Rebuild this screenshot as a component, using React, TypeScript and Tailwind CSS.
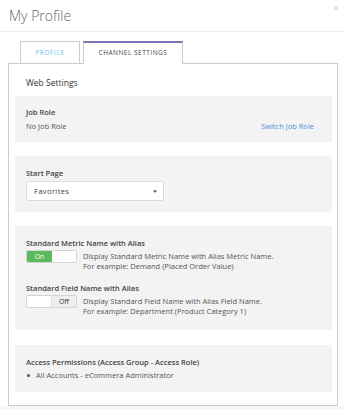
import React from 'react';

const font = { fontFamily: '"Open Sans", "Liberation Sans", sans-serif' };

function Toggle({ on }: { on: boolean }) {
  return (
    <div className="flex h-[13px] w-[51px] shrink-0 overflow-hidden rounded-[2px] border border-[#d4d4d4] bg-white text-[7px] leading-[11px]">
      {on ? (
        <>
          <div className="flex w-[25px] items-center justify-center bg-[#5cb85c] text-white">On</div>
          <div className="flex-1 bg-white" />
        </>
      ) : (
        <>
          <div className="flex-1 bg-white" />
          <div className="flex w-[25px] items-center justify-center border-l border-[#ddd] bg-[#eeeeee] text-[#333]">Off</div>
        </>
      )}
    </div>
  );
}

export default function App() {
  return (
    <div className="relative h-[409px] w-[344px] overflow-hidden bg-white text-[#555]" style={font}>
      {/* header */}
      <div className="flex h-[32px] items-center border-b border-[#ececec] pl-[9px]">
        <h1 className="text-[14px] font-light leading-none text-[#666]">My Profile</h1>
      </div>
      <span className="absolute right-[5px] top-[3px] text-[10px] leading-none text-[#ccc]">×</span>

      {/* tabs */}
      <div className="mt-[9px] flex gap-[3px] pl-[20px]">
        <div className="relative z-10 flex h-[22px] w-[60px] items-center justify-center border border-b-0 border-[#ccc] bg-white text-[6.5px] tracking-[0.6px] text-[#6ec5e6]">
          PROFILE
        </div>
        <div className="relative z-10 -mb-px flex h-[23px] w-[100px] items-center justify-center border-x border-t-[2px] border-x-[#ccc] border-t-[#7d72b5] bg-white pb-px text-[6.5px] tracking-[0.5px] text-[#444]">
          CHANNEL SETTINGS
        </div>
      </div>

      {/* content box */}
      <div className="ml-[8px] h-[343px] w-[330px] border border-[#ccc] pl-[6px] pr-[5px] pt-[13px]">
        <div className="pl-[11px] text-[8.5px] leading-[12px] text-[#333]">Web Settings</div>

        <div className="mt-[7px] bg-[#f3f3f3] px-[11px] pb-[11px] pt-[11px] text-[7.5px] leading-[10px]">
          <div className="font-semibold text-[#444]">Job Role</div>
          <div className="mt-[4px] flex justify-between pr-[7px]">
            <span>No Job Role</span>
            <span className="text-[#4a90d9]">Switch Job Role</span>
          </div>
        </div>

        <div className="mt-[14px] bg-[#f3f3f3] px-[11px] pb-[11px] pt-[12px] text-[7.5px] leading-[10px]">
          <div className="font-semibold text-[#444]">Start Page</div>
          <div className="mt-[3px] flex h-[20px] w-[138px] items-center justify-between rounded-[2px] border border-[#dcdcdc] bg-white pl-[7px] pr-[6px]">
            <span className="tracking-[0.4px] text-[#444]">Favorites</span>
            <svg width="4" height="3" viewBox="0 0 4 3"><path d="M0 0.5h4L2 2.8z" fill="#444" /></svg>
          </div>
        </div>

        <div className="mt-[14px] bg-[#f3f3f3] px-[11px] pb-[14px] pt-[12px] text-[7.5px] leading-[10px]">
          <div className="font-semibold text-[#444]">Standard Metric Name with Alias</div>
          <div className="mt-[2px] flex gap-[6px]">
            <Toggle on />
            <div className="mt-[1px] leading-[10px]">
              <div>Display Standard Metric Name with Alias Metric Name.</div>
              <div>For example: Demand (Placed Order Value)</div>
            </div>
          </div>
          <div className="mt-[12px] font-semibold text-[#444]">Standard Field Name with Alias</div>
          <div className="mt-[2px] flex gap-[6px]">
            <Toggle on={false} />
            <div className="mt-[1px] leading-[10px]">
              <div>Display Standard Field Name with Alias Field Name.</div>
              <div>For example: Department (Product Category 1)</div>
            </div>
          </div>
        </div>

        <div className="mt-[15px] bg-[#f3f3f3] px-[11px] pb-[12px] pt-[12px] text-[7.5px] leading-[10px]">
          <div className="font-semibold text-[#444]">Access Permissions (Access Group - Access Role)</div>
          <ul className="mt-[3px] flex flex-col">
            <li className="flex items-center gap-[6px] pl-[1px]">
              <span className="h-[3px] w-[3px] rounded-full bg-[#555]" />
              <span>All Accounts - eCommera Administrator</span>
            </li>
          </ul>
        </div>
      </div>
      <div className="h-[4px] bg-[#f7f7f7]" />
    </div>
  );
}
